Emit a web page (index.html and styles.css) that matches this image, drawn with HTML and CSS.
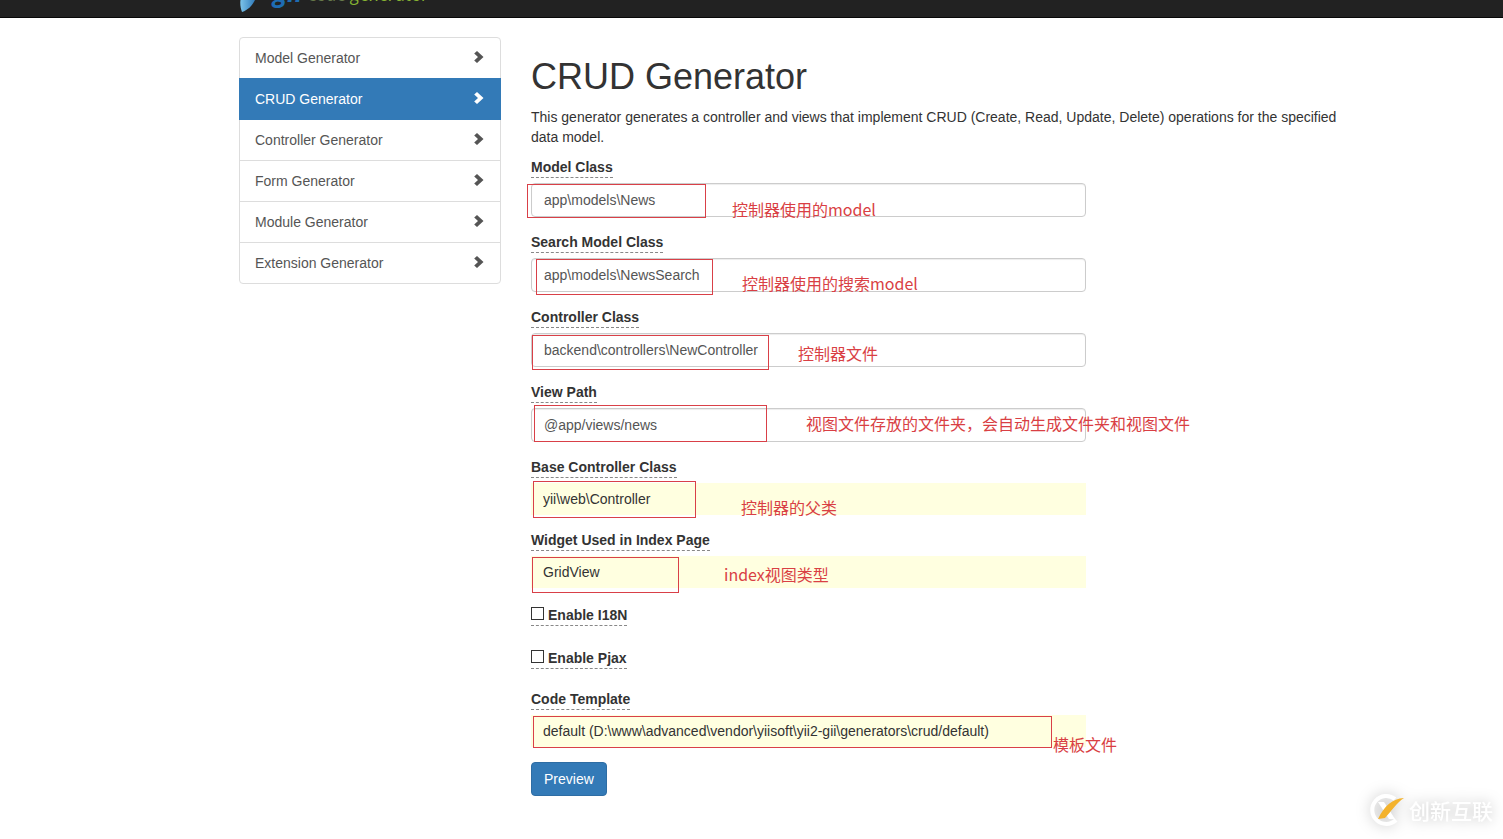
FILE: index.html
```html
<!DOCTYPE html>
<html lang="en">
<head>
<meta charset="utf-8">
<title>CRUD Generator</title>
<link rel="stylesheet" href="styles.css">
</head>
<body>
<header class="navbar">
  <a class="brand" href="#">
    <svg class="brand-leaf" width="20" height="34" viewBox="0 0 20 34" aria-hidden="true"><defs><linearGradient id="leaf" x1="0" y1="0" x2="1" y2="0"><stop offset="0" stop-color="#7cc4ea"/><stop offset="1" stop-color="#1c67ad"/></linearGradient></defs><path d="M3 33C-2 20 4 6 20 0C20 16 15 29 3 33Z" fill="url(#leaf)"/></svg>
    <span class="brand-gii">gii</span>
    <span class="brand-text"><span class="brand-code">code</span> generator</span>
  </a>
</header>
<div class="container">
  <nav class="menu" aria-label="Generators">
    <a class="menu-item" href="#">Model Generator<svg class="chevron" viewBox="0 0 10 12"><path d="M3 0L9.500 6L3 12L0.200 9.500L4 6L0.200 2.500Z"/></svg></a>
    <a class="menu-item active" href="#" aria-current="page">CRUD Generator<svg class="chevron" viewBox="0 0 10 12"><path d="M3 0L9.500 6L3 12L0.200 9.500L4 6L0.200 2.500Z"/></svg></a>
    <a class="menu-item" href="#">Controller Generator<svg class="chevron" viewBox="0 0 10 12"><path d="M3 0L9.500 6L3 12L0.200 9.500L4 6L0.200 2.500Z"/></svg></a>
    <a class="menu-item" href="#">Form Generator<svg class="chevron" viewBox="0 0 10 12"><path d="M3 0L9.500 6L3 12L0.200 9.500L4 6L0.200 2.500Z"/></svg></a>
    <a class="menu-item" href="#">Module Generator<svg class="chevron" viewBox="0 0 10 12"><path d="M3 0L9.500 6L3 12L0.200 9.500L4 6L0.200 2.500Z"/></svg></a>
    <a class="menu-item" href="#">Extension Generator<svg class="chevron" viewBox="0 0 10 12"><path d="M3 0L9.500 6L3 12L0.200 9.500L4 6L0.200 2.500Z"/></svg></a>
  </nav>
  <main class="content">
    <h1>CRUD Generator</h1>
    <p>This generator generates a controller and views that implement CRUD (Create, Read, Update, Delete) operations for the specified data model.</p>
    <form class="form">
      <div class="field">
        <label for="model">Model Class</label>
        <input id="model" class="control" type="text" value="app\models\News">
        <span class="mark mark-model"></span><span class="note note-model">控制器使用的model</span>
      </div>
      <div class="field">
        <label for="search">Search Model Class</label>
        <input id="search" class="control" type="text" value="app\models\NewsSearch">
        <span class="mark mark-search"></span><span class="note note-search">控制器使用的搜索model</span>
      </div>
      <div class="field">
        <label for="controller">Controller Class</label>
        <input id="controller" class="control" type="text" value="backend\controllers\NewController">
        <span class="mark mark-controller"></span><span class="note note-controller">控制器文件</span>
      </div>
      <div class="field">
        <label for="view">View Path</label>
        <input id="view" class="control" type="text" value="@app/views/news">
        <span class="mark mark-view"></span><span class="note note-view">视图文件存放的文件夹，会自动生成文件夹和视图文件</span>
      </div>
      <div class="field">
        <label for="base">Base Controller Class</label>
        <input id="base" class="control sticky" type="text" readonly value="yii\web\Controller">
        <span class="mark mark-base"></span><span class="note note-base">控制器的父类</span>
      </div>
      <div class="field">
        <label for="widget">Widget Used in Index Page</label>
        <input id="widget" class="control sticky" type="text" readonly value="GridView">
        <span class="mark mark-widget"></span><span class="note note-widget">index视图类型</span>
      </div>
      <div class="field check">
        <label for="i18n"><input id="i18n" class="box" type="checkbox">Enable I18N</label>
      </div>
      <div class="field check">
        <label for="pjax"><input id="pjax" class="box" type="checkbox">Enable Pjax</label>
      </div>
      <div class="field">
        <label for="template">Code Template</label>
        <input id="template" class="control sticky" type="text" readonly value="default (D:\www\advanced\vendor\yiisoft\yii2-gii\generators\crud/default)">
        <span class="mark mark-template"></span><span class="note note-template">模板文件</span>
      </div>
      <button class="button" type="submit">Preview</button>
    </form>
  </main>
</div>
<div class="watermark">
  <svg width="36" height="34" viewBox="0 0 36 34" aria-hidden="true"><path d="M26 6A14 14 0 1 0 27 27" fill="none" stroke="#fff" stroke-width="4"/><path d="M9 9H15L26 26H20Z" fill="#fff"/><path d="M9 26C16 12 23 6 35 5C27 10 22 19 16 25Z" fill="#f3b22c"/></svg>
  <span>创新互联</span>
</div>
</body>
</html>
```
FILE: styles.css
```css
* { box-sizing: border-box; }
body {
  margin: 0;
  position: relative;
  min-height: 100vh;
  background: #fff;
  color: #333;
  font: 14px/20px "Liberation Sans", Arial, sans-serif;
}
.navbar {
  display: flex;
  align-items: flex-end;
  height: 18px;
  padding-left: 239px;
  overflow: hidden;
  background: #222;
  border-bottom: 1px solid #080808;
}
.brand {
  display: flex;
  align-items: flex-end;
  padding-bottom: 4px;
  text-decoration: none;
  font-style: italic;
}
.brand-leaf { flex: none; }
.brand-gii {
  margin: 0 0 6px 14px;
  color: #1e6cb3;
  font: italic bold 26px/30px "Open Sans", sans-serif;
}
.brand-text {
  margin: 0 0 9px 6px;
  color: #86b332;
  font: italic 18px/20px "Open Sans", sans-serif;
}
.brand-code { color: #66794a; }
.container {
  display: flex;
  align-items: flex-start;
  gap: 30px;
  max-width: 1394px;
  padding: 19px 30px 43px 239px;
}
.menu { flex: 0 0 262px; }
.menu-item {
  display: flex;
  align-items: center;
  justify-content: space-between;
  height: 42px;
  margin-bottom: -1px;
  padding: 0 16px 0 15px;
  border: 1px solid #ddd;
  color: #555;
  text-decoration: none;
}
.menu-item:first-child { border-radius: 4px 4px 0 0; }
.menu-item:last-child { border-radius: 0 0 4px 4px; margin-bottom: 0; }
.menu-item.active {
  position: relative;
  background: #337ab7;
  border-color: #337ab7;
  color: #fff;
}
.chevron { width: 10px; height: 12px; margin-bottom: 3px; fill: currentColor; }
.content { flex: 1; }
h1 { margin: 20px 0 10px; font-size: 36px; line-height: 40px; font-weight: 500; }
p { margin: 0 0 10px; }
.form { width: 66.667%; }
.field { position: relative; margin-bottom: 15px; }
.field label {
  display: block;
  width: fit-content;
  margin-bottom: 5px;
  border-bottom: 1px dashed #888;
  font-weight: bold;
}
.control {
  display: block;
  width: 100%;
  height: 34px;
  padding: 6px 12px;
  border: 1px solid #ccc;
  border-radius: 4px;
  background: #fff;
  box-shadow: inset 0 1px 1px rgba(0, 0, 0, .075);
  color: #555;
  font: inherit;
}
.sticky {
  height: 32px;
  border: 0;
  border-radius: 0;
  background: #ffffe0;
  box-shadow: none;
  color: #333;
}
.check { padding: 2px 0 5px; margin-bottom: 15px; }
.check label { display: flex; align-items: center; gap: 4px; margin: 0; }
.box {
  appearance: none;
  width: 13px;
  height: 13px;
  margin: 0 0 3px;
  border: 1px solid #333;
  background: #fff;
}
.button {
  display: block;
  padding: 6px 12px;
  border: 1px solid #2e6da4;
  border-radius: 4px;
  background: #337ab7;
  color: #fff;
  font: inherit;
}
.mark { position: absolute; border: 1px solid #d94048; pointer-events: none; }
.note {
  position: absolute;
  color: #d93f44;
  font: 16px/20px "Noto Sans CJK SC", sans-serif;
  white-space: nowrap;
}
.mark-model { left: -4px; top: 27px; width: 179px; height: 34px; }
.mark-search { left: 5px; top: 27px; width: 177px; height: 36px; }
.mark-controller { left: 1px; top: 28px; width: 237px; height: 35px; }
.mark-view { left: 3px; top: 23px; width: 233px; height: 37px; }
.mark-base { left: 2px; top: 24px; width: 163px; height: 37px; }
.mark-widget { left: 1px; top: 27px; width: 147px; height: 36px; }
.mark-template { left: 2px; top: 27px; width: 519px; height: 32px; }
.note-model { left: 201px; top: 42px; }
.note-search { left: 211px; top: 41px; }
.note-controller { left: 267px; top: 36px; }
.note-view { left: 275px; top: 31px; }
.note-base { left: 210px; top: 40px; }
.note-widget { left: 193px; top: 34px; }
.note-template { left: 522px; top: 45px; }
.watermark {
  position: absolute;
  right: 10px;
  bottom: 12px;
  display: flex;
  align-items: center;
  gap: 4px;
  color: #fff;
  font: 500 21px/34px "Noto Sans CJK SC", sans-serif;
  filter: drop-shadow(0 0 7px rgba(0, 0, 0, .25));
}
```
